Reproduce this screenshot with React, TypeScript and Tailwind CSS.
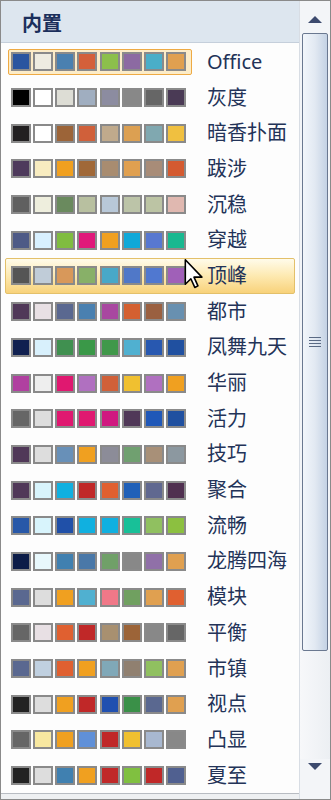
import React from 'react';

type Theme = { name: string; colors: string[] };

const themes: Theme[] = [
  { name: 'Office', colors: ['#2a55a0', '#eeece1', '#4a80b0', '#d4603a', '#8cbf4c', '#8c6aa2', '#4aaec8', '#e0a050'] },
  { name: '灰度', colors: ['#000000', '#ffffff', '#ddddd5', '#a0aec0', '#8c8ca0', '#888888', '#666666', '#4a3a55'] },
  { name: '暗香扑面', colors: ['#222021', '#ffffff', '#9c6438', '#d0603a', '#c0aa8c', '#dca052', '#80a8b0', '#f0c040'] },
  { name: '跋涉', colors: ['#4e3a5c', '#f8ecc0', '#f0a020', '#a06838', '#a88c70', '#e0a050', '#a88c78', '#d45a30'] },
  { name: '沉稳', colors: ['#606060', '#eeeedd', '#6a8a5e', '#b8c0a0', '#b8c8d8', '#bcc4a8', '#bcc4a4', '#e0b8b0'] },
  { name: '穿越', colors: ['#4e5a86', '#d8f0ff', '#80bc40', '#e0187a', '#f0a020', '#10a8d8', '#5878d0', '#18b890'] },
  { name: '顶峰', colors: ['#555555', '#c0ccd8', '#d8985a', '#88b068', '#48a8c8', '#5078c8', '#5078d0', '#a060b8'] },
  { name: '都市', colors: ['#503858', '#e8e0e4', '#5a6890', '#4a80b0', '#a848a0', '#d46030', '#9a6040', '#6890b0'] },
  { name: '凤舞九天', colors: ['#102050', '#d8f0fc', '#409050', '#3a9848', '#40984a', '#50b0d0', '#2858b0', '#2050a0'] },
  { name: '华丽', colors: ['#b040a0', '#eeeeee', '#e01870', '#b070c0', '#d06038', '#f0c030', '#b070c0', '#f0a020'] },
  { name: '活力', colors: ['#666666', '#dddddd', '#e01870', '#e01870', '#d01880', '#503858', '#2058b8', '#2050a0'] },
  { name: '技巧', colors: ['#503858', '#dddddd', '#6890b8', '#f0a020', '#8c8c98', '#70a070', '#a89078', '#8c98a0'] },
  { name: '聚合', colors: ['#503858', '#d8f4fc', '#10b0e0', '#c02828', '#e06030', '#2060b8', '#606890', '#503050'] },
  { name: '流畅', colors: ['#2858a8', '#d8f4fc', '#2050a8', '#10b0e0', '#10b0e0', '#18c098', '#90c060', '#8cc040'] },
  { name: '龙腾四海', colors: ['#0c1c48', '#e8f8fc', '#4080b0', '#4a78a8', '#70a068', '#888888', '#9070a8', '#e0a050'] },
  { name: '模块', colors: ['#5a6890', '#dddddd', '#f0a020', '#50b0d0', '#f07888', '#70a060', '#e0a050', '#e06030'] },
  { name: '平衡', colors: ['#666666', '#e8e0e4', '#e06030', '#c02828', '#a89070', '#9c6438', '#888888', '#666666'] },
  { name: '市镇', colors: ['#5a6890', '#c0d0e0', '#e06030', '#f0a020', '#80a8b8', '#908070', '#90c060', '#e0a050'] },
  { name: '视点', colors: ['#222222', '#dddddd', '#f0a020', '#c02828', '#2050b0', '#3a9048', '#5a6890', '#e0a050'] },
  { name: '凸显', colors: ['#666666', '#f8e8a0', '#f0a020', '#6090d8', '#c02828', '#f0c030', '#a8b8d0', '#888888'] },
  { name: '夏至', colors: ['#222222', '#dddddd', '#4080b0', '#f0a020', '#c02828', '#80c040', '#c02828', '#506090'] },
];

function ThemeRow({ theme, selected, hovered }: { theme: Theme; selected: boolean; hovered: boolean }) {
  return (
    <div
      className={
        'flex items-center h-[35.7px] mx-[4px] border rounded-[2px] ' +
        (hovered
          ? 'border-[#e3c06a] bg-gradient-to-b from-[#fffbea] via-[#fde9b0] to-[#f8d27a]'
          : 'border-transparent')
      }
    >
      <div
        className={
          'flex gap-[2.15px] ml-[2px] pl-[2px] pr-[5px] py-[2.5px] border-[1.5px] rounded-[2px] ' +
          (selected ? 'border-[#eeaa44] bg-[#fcecc8]' : 'border-transparent')
        }
      >
        {theme.colors.map((c, i) => (
          <div key={i} className="w-[20px] h-[19px] border-[2px] border-[#8a8a8a]" style={{ backgroundColor: c }} />
        ))}
      </div>
      <span className="ml-[15px] text-[20px] leading-none text-[#233358] whitespace-nowrap">{theme.name}</span>
    </div>
  );
}

function Scrollbar() {
  return (
    <div className="w-[31px] flex flex-col bg-[#f3f5f8] border-l border-[#d8dde4]">
      <div className="h-[32px] flex items-center justify-center pt-[4px]">
        <svg width="14" height="7" viewBox="0 0 14 7">
          <path d="M7 0 L14 7 L0 7 Z" fill="#3c4a6e" />
        </svg>
      </div>
      <div className="mx-[2px] h-[618px] border border-[#6a7890] rounded-[2px] bg-gradient-to-r from-[#f2f6fb] via-[#e2e9f2] to-[#c4d2e4] flex items-center justify-center">
        <div className="flex flex-col gap-[2px]">
          <div className="w-[12px] h-[1px] bg-[#5a6a84]" />
          <div className="w-[12px] h-[1px] bg-[#5a6a84]" />
          <div className="w-[12px] h-[1px] bg-[#5a6a84]" />
          <div className="w-[12px] h-[1px] bg-[#5a6a84]" />
        </div>
      </div>
      <div className="flex-1 bg-gradient-to-r from-[#f7f8fa] to-[#eceff3]" />
      <div className="h-[40px] flex items-start justify-center pt-[4px]">
        <svg width="14" height="7" viewBox="0 0 14 7">
          <path d="M0 0 L14 0 L7 7 Z" fill="#3c4a6e" />
        </svg>
      </div>
    </div>
  );
}

export default function App() {
  return (
    <div
      className="relative w-[331px] h-[800px] overflow-hidden bg-white border border-[#8a8a8a] flex"
      style={{ fontFamily: '"Noto Sans", "Noto Sans CJK SC", sans-serif' }}
    >
      <div className="flex-1 flex flex-col bg-[#fdfdfd]">
        <div className="h-[42px] shrink-0 flex items-center pl-[21px] pt-[4px] bg-[#dde6ef] border-b border-[#c5cfdb]">
          <span className="text-[20px] font-bold text-[#1b2f5c]">内置</span>
        </div>
        <div className="flex flex-col pt-[1px]">
          {themes.map((t, i) => (
            <ThemeRow key={t.name} theme={t} selected={i === 0} hovered={i === 6} />
          ))}
        </div>
        <div className="h-[6px] border-t border-[#b8bcc2] bg-[#eef0f2]" />
      </div>
      <Scrollbar />

      {/* mouse cursor */}
      <svg className="absolute left-[183px] top-[258px]" width="20" height="30" viewBox="0 0 12 19">
        <path d="M0.5 0.5 L0.5 16 L4 12.5 L6.5 18 L8.5 17 L6 11.5 L11 11.5 Z" fill="#ffffff" stroke="#000000" strokeWidth="1" strokeLinejoin="round" />
      </svg>
    </div>
  );
}
